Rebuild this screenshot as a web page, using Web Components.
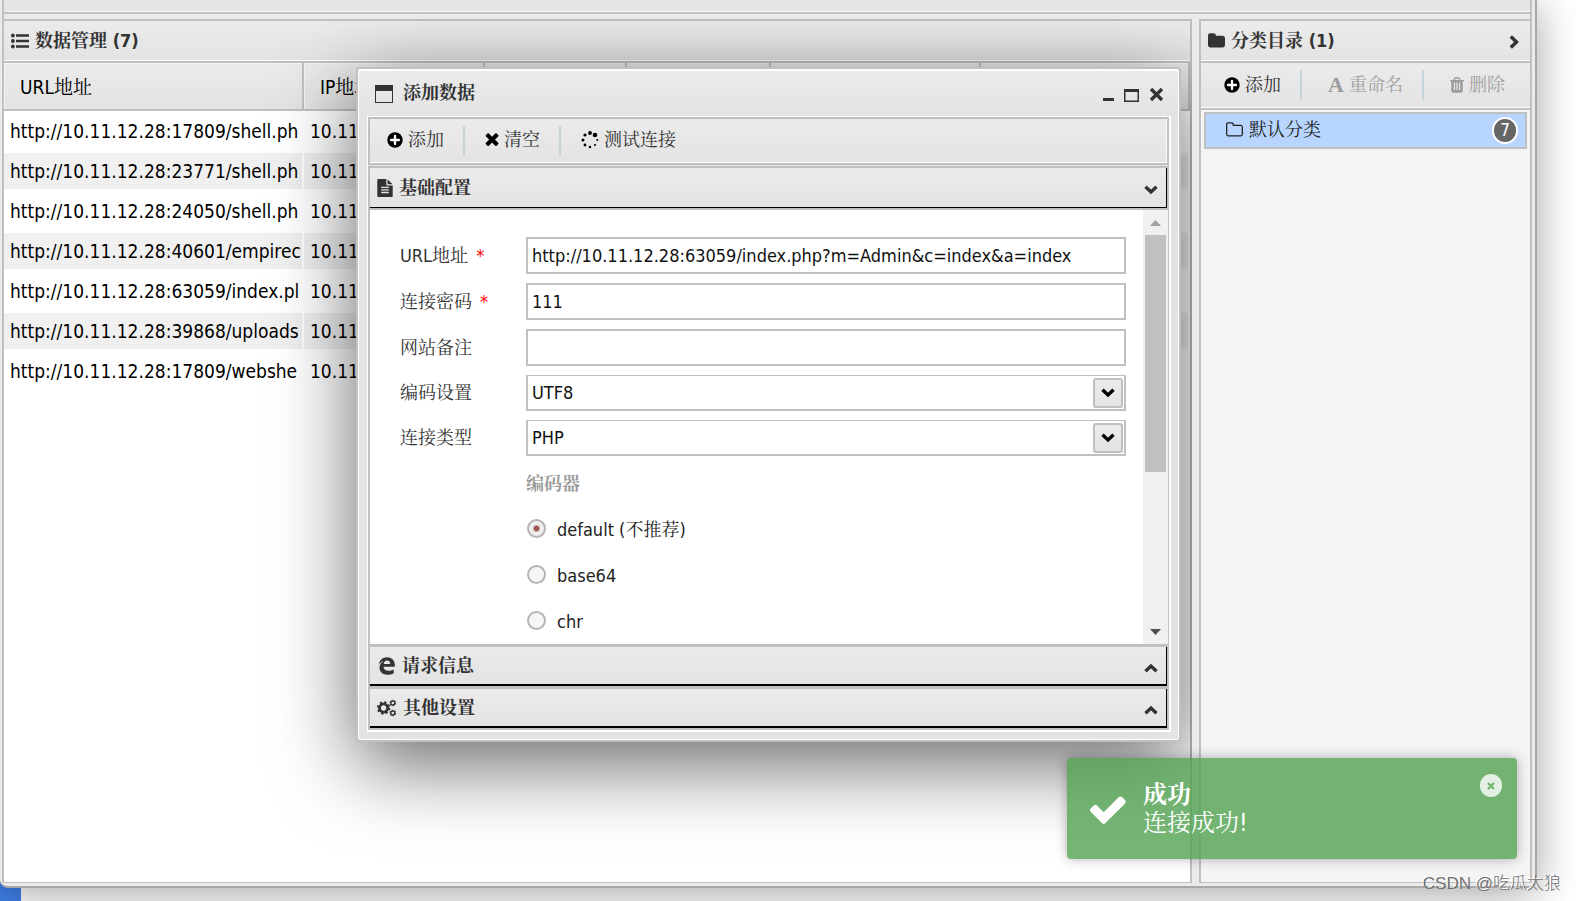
<!DOCTYPE html>
<html lang="zh-CN">
<head>
<meta charset="utf-8">
<title>数据管理</title>
<style>
  :root {
    --line: #c0c0c0;
    --face: linear-gradient(#ebebeb, #e3e3e3);
    --ink: #333;
    --text: 18px;
    --grid-text: 19px;
  }
  * { box-sizing: border-box; }
  body {
    margin: 0;
    height: 100vh;
    overflow: hidden;
    background: #fff;
    color: #000;
    font-family: "DejaVu Sans Condensed", "Noto Serif CJK SC", "Noto Sans CJK SC", sans-serif;
    font-size: var(--text);
    line-height: 24px;
  }
</style>
</head>
<body>
<app-window></app-window>
<script>
const base = `*{box-sizing:border-box} button,input,select{font:inherit;color:inherit;margin:0}`;

function define(name, css, html, setup) {
  const t = document.createElement('template');
  t.innerHTML = `<style>${base}${css}</style>${html}`;
  customElements.define(name, class extends HTMLElement {
    constructor() {
      super();
      this.attachShadow({ mode: 'open' }).append(t.content.cloneNode(true));
    }
    connectedCallback() { if (setup && !this.ready) { this.ready = true; setup(this, this.shadowRoot); } }
  });
}

const gear = (x, y, r, n) => {
  const tooth = 2 * Math.PI * r / n;
  return `<circle cx="${x}" cy="${y}" r="${r * .72}" fill="none" stroke="currentColor" stroke-width="${r * .5}"/>
    <circle cx="${x}" cy="${y}" r="${r}" fill="none" stroke="currentColor" stroke-width="${r * .4}" stroke-dasharray="${tooth * .5} ${tooth * .5}"/>`;
};
const icons = {
  list: ['0 0 18 16', '<circle cx="1.9" cy="2.5" r="1.9"/><circle cx="1.9" cy="8" r="1.9"/><circle cx="1.9" cy="13.500" r="1.9"/><path d="M5 1.200h13v2.600H5zM5 6.700h13v2.600H5zM5 12.200h13v2.600H5z"/>'],
  plus: ['0 0 16 16', '<circle cx="8" cy="8" r="7.7"/><path d="M8 4v8M4 8h8" stroke="#fff" stroke-width="2.3" stroke-linecap="round"/>'],
  times: ['240 350 1300 1300', '<path d="M1490 1322q0 40-28 68l-136 136q-28 28-68 28t-68-28l-294-294-294 294q-28 28-68 28t-68-28l-136-136q-28-28-28-68t28-68l294-294-294-294q-28-28-28-68t28-68l136-136q28-28 68-28t68 28l294 294 294-294q28-28 68-28t68 28l136 136q28 28 28 68t-28 68l-294 294 294 294q28 28 28 68z"/>'],
  spinner: ['0 0 18 18', '<circle cx="9" cy="2" r="1.9"/><circle cx="14" cy="4" r="2.3"/><circle cx="16.3" cy="9" r="1"/><circle cx="14" cy="14" r="1.1"/><circle cx="9" cy="16" r="1.3"/><circle cx="4" cy="14" r="1.4"/><circle cx="2" cy="9" r="1.5"/><circle cx="4" cy="4" r="1.6"/>'],
  file: ['128 0 1536 1792', '<path fill-rule="evenodd" d="M1596 476q14 14 28 36h-472v-472q22 14 36 28zm-476 164h544v1056q0 40-28 68t-68 28h-1344q-40 0-68-28t-28-68v-1600q0-40 28-68t68-28h800v544q0 40 28 68t68 28zm160 736v-64q0-14-9-23t-23-9h-704q-14 0-23 9t-9 23v64q0 14 9 23t23 9h704q14 0 23-9t9-23zm0-256v-64q0-14-9-23t-23-9h-704q-14 0-23 9t-9 23v64q0 14 9 23t23 9h704q14 0 23-9t9-23zm0-256v-64q0-14-9-23t-23-9h-704q-14 0-23 9t-9 23v64q0 14 9 23t23 9h704q14 0 23-9t9-23z"/>'],
  folder: ['64 128 1664 1536', '<path d="M1728 608v704q0 92-66 158t-158 66h-1216q-92 0-158-66t-66-158v-960q0-92 66-158t158-66h320q92 0 158 66t66 158v32h672q92 0 158 66t66 158z"/>'],
  folderopen: ['64 128 1664 1536', '<path d="M1600 1312v-704q0-40-28-68t-68-28h-704q-40 0-68-28t-28-68v-64q0-40-28-68t-68-28h-320q-40 0-68 28t-28 68v960q0 40 28 68t68 28h1216q40 0 68-28t28-68zm128-704v704q0 92-66 158t-158 66h-1216q-92 0-158-66t-66-158v-960q0-92 66-158t158-66h320q92 0 158 66t66 158v32h672q92 0 158 66t66 158z"/>'],
  trash: ['192 128 1408 1536', '<path fill-rule="evenodd" d="M704 1376v-704q0-14-9-23t-23-9h-64q-14 0-23 9t-9 23v704q0 14 9 23t23 9h64q14 0 23-9t9-23zm256 0v-704q0-14-9-23t-23-9h-64q-14 0-23 9t-9 23v704q0 14 9 23t23 9h64q14 0 23-9t9-23zm256 0v-704q0-14-9-23t-23-9h-64q-14 0-23 9t-9 23v704q0 14 9 23t23 9h64q14 0 23-9t9-23zm-544-992h448l-48-117q-7-9-17-11h-317q-10 2-17 11zm928 32v64q0 14-9 23t-23 9h-96v948q0 83-47 143.5t-113 60.5h-832q-66 0-113-58.5t-47-141.5v-952h-96q-14 0-23-9t-9-23v-64q0-14 9-23t23-9h309l70-167q15-37 54-63t79-26h320q40 0 79 26t54 63l70 167h309q14 0 23 9t9 23z"/>'],
  check: ['120 330 1560 1180', '<path d="M1671 566q0 40-28 68l-724 724-136 136q-28 28-68 28t-68-28l-136-136-362-362q-28-28-28-68t28-68l136-136q28-28 68-28t68 28l294 295 656-657q28-28 68-28t68 28l136 136q28 28 28 68z"/>'],
  edge: ['0 0 18 18', '<path d="M1 8C2 3 5.5 .3 9.500 .3c4.500 0 7.800 3 7.800 7.700v1.800H6c.1 2.800 2.200 4 5 4 1.900 0 3.600-.5 5.200-1.400v3.900c-1.700 1-3.700 1.500-6 1.500-5 0-8.200-2.800-8.200-7C2 7.800 3.700 5.300 6.300 4.100 4 4.600 2.200 6 1 8zM6.200 6.900h6.500c0-2-1-3.400-3.100-3.400C7.700 3.500 6.500 4.900 6.200 6.900z" fill-rule="evenodd"/>'],
  cogs: ['0 0 20 18', gear(6.6, 9, 5.6, 8) + gear(15.800, 4, 2.800, 6) + gear(15.800, 14, 2.800, 6)],
  win: ['0 0 18 18', '<path fill-rule="evenodd" d="M0 0h18v18H0zM1 6h16v11H1z"/>'],
  min: ['0 0 11 15', '<path d="M0 11h11v3H0z"/>'],
  max: ['0 0 15 15', '<path fill-rule="evenodd" d="M0 2h15v13H0zM1.500 5h12v8.500h-12z"/>'],
  close: ['0 0 15 15', '<path d="M2 2l11 11M13 2L2 13" stroke="currentColor" stroke-width="3.400"/>'],
  down: ['0 0 14 10', '<path d="M1.500 1.800L7 7l5.500-5.200" fill="none" stroke="currentColor" stroke-width="3.400"/>'],
  up: ['0 0 14 10', '<path d="M1.500 8.200L7 3l5.500 5.200" fill="none" stroke="currentColor" stroke-width="3.400"/>'],
  right: ['0 0 10 14', '<path d="M1.800 1.500L7.500 7l-5.700 5.500" fill="none" stroke="currentColor" stroke-width="3.400"/>'],
  tiny: ['0 0 10 10', '<path d="M2 2l6 6M8 2L2 8" stroke="currentColor" stroke-width="2.200"/>'],
  triup: ['0 0 11 6', '<path d="M0 6l5.500-6L11 6z"/>'],
  tridown: ['0 0 11 6', '<path d="M0 0l5.500 6L11 0z"/>']
};

define('ui-icon', `:host{display:inline-flex;flex:none} svg{display:block;fill:currentColor}`, '', (el, root) => {
  const [vb, body] = icons[el.getAttribute('name')];
  const box = document.createElement('div');
  box.innerHTML = `<svg width="${el.getAttribute('w')}" height="${el.getAttribute('h')}" viewBox="${vb}" aria-hidden="true">${body}</svg>`;
  root.append(box.firstChild);
});

define('tool-button', `
  :host{display:flex;flex:none}
  button{display:flex;align-items:center;gap:5px;padding:0;border:0;background:none;white-space:nowrap}
  button:disabled{color:#9c9c9c}
  span{color:#333} button:disabled span{color:#a0a0a0}`,
  `<button type="button"><slot name="icon"></slot><span><slot></slot></span></button>`,
  (el, root) => { root.querySelector('button').disabled = el.hasAttribute('disabled'); });

define('tool-separator', `:host{display:block;flex:none;width:2px;height:30px;background:#c3d5d8}`, '');

define('panel-header', `
  :host{display:flex;align-items:center;flex:none;height:42px;padding:0 8px 1px 7px;gap:6px;background:var(--face);
    border-bottom:2px solid var(--line);box-shadow:inset 0 -1px #fff;color:var(--ink);font-weight:700}
  h2{margin:0;flex:1;font:inherit;white-space:nowrap}`,
  `<slot name="icon"></slot><h2><slot></slot></h2><slot name="action"></slot>`);

define('data-grid', `
  :host{display:block;flex:1;min-height:0;overflow:hidden;background:#fff;font-size:var(--grid-text)}
  table{border-collapse:separate;border-spacing:0;table-layout:fixed;width:100%}
  th{height:48px;padding:2px 16px 0;text-align:left;font-weight:400;white-space:nowrap;background:var(--face);
    border-right:2px solid var(--line);border-bottom:2px solid var(--line);box-shadow:inset 1px 1px #f4f4f4}
  td{height:40px;padding:0 0 0 6px;border:solid #fff;border-width:2px 2px 2px 0;
    white-space:nowrap;overflow:hidden}
  tr:nth-child(even) td{background:#f0f0f0}
  .c1{width:300px}.c2{width:181px}.c3{width:142px}.c4{width:144px}.c5{width:210px}`,
  `<table><colgroup><col class="c1"><col class="c2"><col class="c3"><col class="c4"><col class="c5"><col></colgroup>
   <thead><tr><th>URL地址</th><th>IP地址</th><th></th><th></th><th></th><th></th></tr></thead><tbody></tbody></table>`,
  (el, root) => {
    const urls = ['17809/shell.ph', '23771/shell.ph', '24050/shell.ph', '40601/empirec', '63059/index.pl', '39868/uploads', '17809/webshe'];
    root.querySelector('tbody').innerHTML = urls.map(u =>
      `<tr><td>http://10.11.12.28:${u}</td><td>10.11</td><td></td><td></td><td></td><td></td></tr>`).join('');
  });

define('category-item', `
  :host{display:block;margin:2px 3px}
  a{display:flex;align-items:center;gap:6px;height:37px;padding:0 7px 1px 20px;border:2px solid var(--line);
    background:#b7d5ff;color:#222;text-decoration:none}
  span{flex:1}
  b{display:grid;place-items:center;width:26px;height:27px;border:2px solid #fff;border-radius:13px;background:#666;
    color:#fff;font-size:17px;font-weight:400;line-height:20px}`,
  `<a href="#default"><slot name="icon"></slot><span><slot></slot></span><b><slot name="count"></slot></b></a>`);

define('accordion-head', `
  :host{display:block;flex:none}
  button{display:flex;align-items:center;gap:6px;width:100%;height:var(--h,39px);padding:0 8px 0 7px;border:0;
    border-right:1px solid #000;border-bottom:var(--edge,2px) solid #000;background:var(--face);color:var(--ink);font-weight:700;text-align:left}
  span{flex:1}
  slot[name=arrow]{display:block;padding-top:3px}`,
  `<button type="button"><slot name="icon"></slot><span><slot></slot></span><slot name="arrow"></slot></button>`);

define('form-field', `
  :host{display:grid;grid-template-columns:126px 1fr;align-items:center}
  label{color:#333;white-space:nowrap}
  label i{color:#f00;font-style:normal;margin-left:8px}
  .box{display:grid;align-items:center}
  .box>*{grid-area:1/1}
  input,select{width:100%;height:37px;padding:0 4px;border:2px solid var(--line);border-radius:0;background:#fff;
    color:#111;outline:0}
  select{appearance:none;height:36px;border-top-width:1px}
  .drop{justify-self:end;display:grid;place-items:center;width:30px;height:30px;margin-right:3px;border:2px solid var(--line);
    border-radius:3px;background:var(--face);pointer-events:none;color:#000}`,
  `<label for="f"></label><div class="box"></div>`,
  (el, root) => {
    const label = root.querySelector('label'), box = root.querySelector('.box'), v = el.getAttribute('value') || '';
    label.innerHTML = el.getAttribute('label') + (el.hasAttribute('required') ? '<i>*</i>' : '');
    if (el.hasAttribute('select')) {
      box.innerHTML = `<select id="f"><option>${v}</option></select><span class="drop"><ui-icon name="down" w="14" h="10"></ui-icon></span>`;
    } else {
      box.innerHTML = '<input id="f" type="text">';
      box.firstChild.value = v;
    }
  });

define('encoder-options', `
  :host{display:block;padding-left:126px}
  fieldset{margin:0;padding:0;border:0}
  legend{float:left;padding:0;display:flex;align-items:center;height:38px;margin-bottom:2px;color:#999;font-weight:700}
  div{display:grid;grid-auto-rows:46px;clear:both}
  label{display:flex;align-items:center;gap:11px;padding-left:1px;color:#222}
  input{appearance:none;width:19px;height:19px;border:2px solid #b8b4b6;border-radius:50%;background:#f6f6f6}
  input:checked{background:radial-gradient(circle,#955 0 2px,#eee 4px)}
  span{padding-top:4px}`,
  `<fieldset><legend>编码器</legend><div>
   <label><input type="radio" name="encoder" checked><span>default (不推荐)</span></label>
   <label><input type="radio" name="encoder"><span>base64</span></label>
   <label><input type="radio" name="encoder"><span>chr</span></label></div></fieldset>`);

define('scroll-track', `
  :host{display:flex;flex-direction:column;align-items:center;flex:none;width:26px;padding:10px 0 9px;background:#f0f0f0;border-right:1px solid var(--line)}
  .thumb{width:21px;height:57%;margin:9px 0 auto;background:#c0c0c0}`,
  `<ui-icon name="triup" w="11" h="6" style="color:#a0a0a0"></ui-icon><div class="thumb"></div><ui-icon name="tridown" w="11" h="6" style="color:#505050"></ui-icon>`);

define('data-dialog', `
  :host{display:block;width:825px;border:2px solid var(--line);border-radius:4px;background:#e3e3e3;
    box-shadow:inset 0 0 0 1px #fff,0 22px 80px rgba(0,0,0,.6);padding:0 8px 8px 9px}
  header{display:flex;align-items:center;height:47px;margin:0 -7px 0 -8px;padding:3px 14px 2px 16px;gap:10px;color:var(--ink);
    border-top:2px solid #fff;background:var(--face)}
  h1{flex:1;margin:0;padding-bottom:2px;font-size:var(--text);line-height:24px;font-weight:700}
  header button{display:flex;padding:0;border:0;background:none}
  header ui-icon{display:block}
  .frame{border:solid #fff;border-width:1px 2px 2px 1px}
  .tools{display:flex;align-items:center;height:48px;border:2px solid var(--line);box-shadow:inset -1px -1px #fff;background:var(--face);padding:0 17px 2px}
  .tools tool-separator{margin:2px 20px 0 19px}
  .acc{border:2px solid var(--line);margin-top:1px;display:flex;flex-direction:column}
  .body{display:flex;height:436px;overflow:hidden;background:#fff;margin-right:-2px;border-top:2px solid var(--line)}
  form{flex:1;min-width:0;padding:27px 17px 0 30px;overflow:hidden}
  form-field{margin-bottom:9px}
  .next{border-top:3px solid var(--line)}`,
  `<header><ui-icon name="win" w="18" h="18"></ui-icon><h1>添加数据</h1>
     <button type="button" aria-label="最小化"><ui-icon name="min" w="11" h="15"></ui-icon></button>
     <button type="button" aria-label="最大化"><ui-icon name="max" w="15" h="15"></ui-icon></button>
     <button type="button" aria-label="关闭"><ui-icon name="close" w="15" h="15"></ui-icon></button></header>
   <div class="frame"><div class="tools">
     <tool-button><ui-icon slot="icon" name="plus" w="16" h="16"></ui-icon>添加</tool-button><tool-separator></tool-separator>
     <tool-button><ui-icon slot="icon" name="times" w="14" h="14"></ui-icon>清空</tool-button><tool-separator></tool-separator>
     <tool-button><ui-icon slot="icon" name="spinner" w="18" h="18"></ui-icon>测试连接</tool-button></div>
   <div class="acc">
     <accordion-head style="--h:40px;--edge:1px"><ui-icon slot="icon" name="file" w="16" h="18"></ui-icon>基础配置<ui-icon slot="arrow" name="down" w="14" h="10"></ui-icon></accordion-head>
     <div class="body"><form>
       <form-field label="URL地址" required value="http://10.11.12.28:63059/index.php?m=Admin&amp;c=index&amp;a=index"></form-field>
       <form-field label="连接密码" required value="111"></form-field>
       <form-field label="网站备注"></form-field>
       <form-field label="编码设置" select value="UTF8"></form-field>
       <form-field label="连接类型" select value="PHP"></form-field>
       <encoder-options></encoder-options>
     </form><scroll-track></scroll-track></div>
     <accordion-head class="next"><ui-icon slot="icon" name="edge" w="19" h="18"></ui-icon>请求信息<ui-icon slot="arrow" name="up" w="14" h="10"></ui-icon></accordion-head>
     <accordion-head class="next"><ui-icon slot="icon" name="cogs" w="20" h="18"></ui-icon>其他设置<ui-icon slot="arrow" name="up" w="14" h="10"></ui-icon></accordion-head>
   </div></div>`);

define('toast-message', `
  :host{display:flex;width:450px;height:101px;padding:14px 15px 0 23px;gap:17px;border-radius:4px;background:rgba(81,163,81,.8);
    box-shadow:0 0 12px rgba(0,0,0,.3);color:#fff;font-size:24px;line-height:28px}
  .text{flex:1;padding-top:9px}
  strong,span{display:block}
  .tick{margin-top:24px}
  button{display:grid;place-items:center;width:22px;height:23px;margin-top:2px;padding:0;border:0;border-radius:11px;background:rgba(255,255,255,.8);color:#72b372}`,
  `<ui-icon class="tick" name="check" w="36" h="28"></ui-icon><div class="text" role="status"><strong>成功</strong><span>连接成功!</span></div>
   <button type="button" aria-label="关闭"><ui-icon name="tiny" w="10" h="10"></ui-icon></button>`);

define('app-window', `
  :host{display:flex;height:100%;padding:0 39px 13px 0;position:relative;overflow:hidden;background:linear-gradient(90deg,#3f7fe8 21px,transparent 21px) 0 100%/100% 20px no-repeat}
  .win{position:relative;flex:1;min-width:0;display:flex;flex-direction:column;border:solid #a8a8a8;border-width:0 2px 2px 0;border-radius:0 0 8px 8px;
    background:#ebebeb;box-shadow:0 6px 44px rgba(0,0,0,.36);padding:0 3px 3px 2px;z-index:0}
  .top{position:relative;z-index:2;height:14px;flex:none;background:#e5e5e5;border:solid var(--line);border-width:0 2px 2px;box-shadow:inset 0 -1px #f8f8f8}
  .gap{position:relative;z-index:2;height:5px;flex:none;background:#ebebeb;border:solid var(--line);border-width:0 2px}
  .cols{flex:1;min-height:0;display:flex}
  .main{flex:1;min-width:0;display:flex;flex-direction:column;border:2px solid var(--line);border-bottom-width:1px;background:#fff}
  .side{position:relative;z-index:2;display:flex;width:340px;flex:none;padding-left:7px;background:#ebebeb}
  .side>div{flex:1;min-width:0;display:flex;flex-direction:column;border:2px solid var(--line);border-bottom-width:1px;background:#f4f4f4}
  .tools{display:flex;align-items:center;height:47px;flex:none;padding:0 20px 1px 23px;background:var(--face);border-bottom:2px solid var(--line);box-shadow:inset 0 -1px #fff}
  tool-separator{margin:0 26px 0 19px}
  .letter{font:bold 22px/20px "Liberation Serif",serif}
  .clip{position:absolute;z-index:1;inset:0;overflow:hidden;border-radius:0 0 8px 8px;pointer-events:none;display:flex;justify-content:center;align-items:flex-start;padding:67px 0 0 2px}
  .clip>*{pointer-events:auto}
  toast-message{position:absolute;z-index:3;right:59px;bottom:42px}
  .mark{position:absolute;z-index:4;right:15px;bottom:5px;color:#707070;font:300 17px/24px "Liberation Sans","Noto Sans CJK SC",sans-serif;text-shadow:-1px -1px #fff}
  .chev{display:flex;padding:2px 3px 0 0;border:0;background:none}`,
  `<div class="win">
     <div class="top"></div><div class="gap"></div>
     <div class="cols">
       <section class="main"><panel-header><ui-icon slot="icon" name="list" w="18" h="16"></ui-icon>数据管理 (7)</panel-header><data-grid></data-grid></section>
       <aside class="side"><div>
         <panel-header><ui-icon slot="icon" name="folder" w="17" h="16"></ui-icon>分类目录 (1)<button slot="action" class="chev" type="button" aria-label="折叠"><ui-icon name="right" w="10" h="14"></ui-icon></button></panel-header>
         <div class="tools">
           <tool-button><ui-icon slot="icon" name="plus" w="16" h="16"></ui-icon>添加</tool-button><tool-separator></tool-separator>
           <tool-button disabled><span slot="icon" class="letter">A</span>重命名</tool-button><tool-separator></tool-separator>
           <tool-button disabled><ui-icon slot="icon" name="trash" w="14" h="16"></ui-icon>删除</tool-button>
         </div>
         <category-item><ui-icon slot="icon" name="folderopen" w="17" h="16"></ui-icon>默认分类<span slot="count">7</span></category-item>
       </div></aside>
     </div>
     <div class="clip"><data-dialog></data-dialog></div>
   </div>
   <toast-message></toast-message>
   <div class="mark">CSDN @吃瓜太狼</div>`);
</script>
</body>
</html>
